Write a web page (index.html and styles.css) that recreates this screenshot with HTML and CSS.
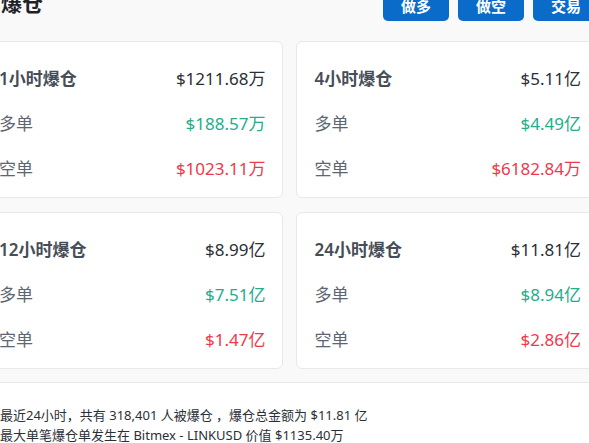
FILE: index.html
```html
<!DOCTYPE html>
<html lang="zh-CN">
<head>
<meta charset="utf-8">
<title>爆仓</title>
<link rel="stylesheet" href="styles.css">
</head>
<body>
<div class="page">
  <header class="header">
    <h1 class="title">爆仓</h1>
    <div class="actions">
      <button class="btn">做多</button>
      <button class="btn">做空</button>
      <button class="btn">交易</button>
    </div>
  </header>
  <section class="grid">
    <div class="card">
      <div class="row head"><span class="label">1小时爆仓</span><span class="val">$1211.68万</span></div>
      <div class="row"><span class="label">多单</span><span class="val up">$188.57万</span></div>
      <div class="row"><span class="label">空单</span><span class="val down">$1023.11万</span></div>
    </div>
    <div class="card">
      <div class="row head"><span class="label">4小时爆仓</span><span class="val">$5.11亿</span></div>
      <div class="row"><span class="label">多单</span><span class="val up">$4.49亿</span></div>
      <div class="row"><span class="label">空单</span><span class="val down">$6182.84万</span></div>
    </div>
    <div class="card">
      <div class="row head"><span class="label">12小时爆仓</span><span class="val">$8.99亿</span></div>
      <div class="row"><span class="label">多单</span><span class="val up">$7.51亿</span></div>
      <div class="row"><span class="label">空单</span><span class="val down">$1.47亿</span></div>
    </div>
    <div class="card">
      <div class="row head"><span class="label">24小时爆仓</span><span class="val">$11.81亿</span></div>
      <div class="row"><span class="label">多单</span><span class="val up">$8.94亿</span></div>
      <div class="row"><span class="label">空单</span><span class="val down">$2.86亿</span></div>
    </div>
  </section>
  <footer class="summary">
    <p>最近24小时，共有 318,401 人被爆仓 ，爆仓总金额为 $11.81 亿</p>
    <p>最大单笔爆仓单发生在 Bitmex - LINKUSD 价值 $1135.40万</p>
  </footer>
</div>
</body>
</html>
```
FILE: styles.css
```css
html, body {
  margin: 0;
  padding: 0;
  background: #f9f9f9;
  font-family: "Noto Sans", "Noto Sans CJK SC", sans-serif;
  overflow: hidden;
}
.page {
  margin-left: -20px;
  width: 618px;
}
.header {
  margin-top: -11px;
  height: 32px;
  display: flex;
  align-items: center;
  justify-content: space-between;
}
.title {
  margin: 0;
  padding-left: 21px;
  font-size: 21px;
  font-weight: 700;
  color: #1e2329;
  line-height: 32px;
  position: relative;
  top: -2px;
}
.actions {
  display: flex;
  gap: 9px;
  margin-right: -1px;
}
.btn {
  width: 66px;
  height: 32px;
  border: none;
  border-radius: 5px;
  background: #0b6bc9;
  color: #fff;
  font-family: "Noto Sans CJK SC", sans-serif;
  font-size: 15px;
  font-weight: 700;
  padding: 0;
}
.grid {
  margin-top: 20px;
  display: grid;
  grid-template-columns: 1fr 1fr;
  column-gap: 13px;
  row-gap: 14px;
}
.card {
  background: #fff;
  border: 1px solid #e8e8e8;
  border-radius: 6px;
  padding: 13px 16px 7px 18px;
}
.row {
  height: 45px;
  display: flex;
  align-items: center;
  justify-content: space-between;
  font-size: 17px;
}
.label {
  color: #5e6673;
}
.head .label {
  color: #474d57;
  font-weight: 600;
}
.val {
  color: #2b2f36;
}
.val.up {
  color: #24ad8a;
}
.val.down {
  color: #f0384c;
}
.summary {
  margin-top: 13px;
  background: #fff;
  border-top: 1px solid #e8e8e8;
  padding: 22px 20px 20px;
  height: 80px;
}
.summary p {
  margin: 0;
  font-size: 13px;
  line-height: 20px;
  color: #2b2f36;
}
```
